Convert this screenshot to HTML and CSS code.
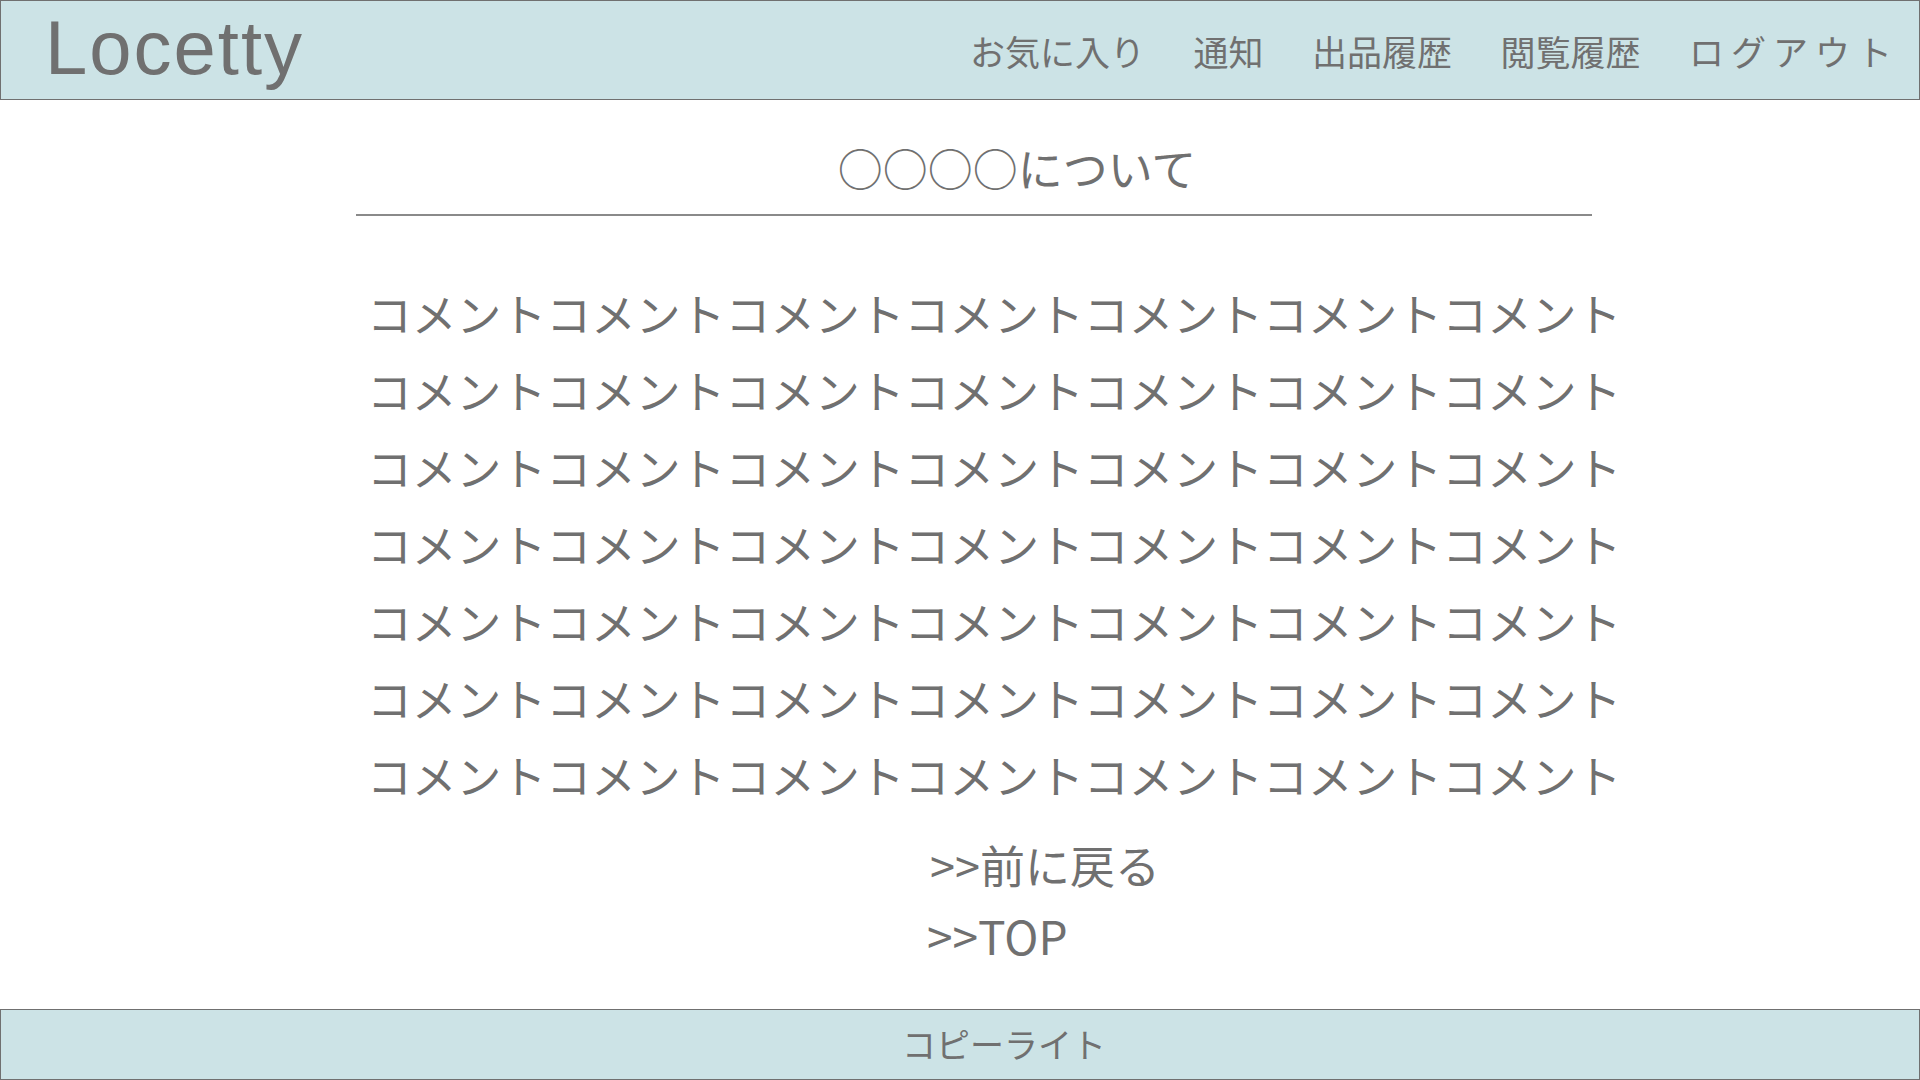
FILE: index.html
```html
<!DOCTYPE html>
<html lang="ja">
<head>
<meta charset="utf-8">
<title>Locetty</title>
<link rel="stylesheet" href="styles.css">
</head>
<body>
<header class="site-header">
  <div class="logo">Locetty</div>
  <nav class="nav">
    <a class="nav-item" href="#">お気に入り</a>
    <a class="nav-item" href="#">通知</a>
    <a class="nav-item" href="#">出品履歴</a>
    <a class="nav-item" href="#">閲覧履歴</a>
    <a class="nav-item nav-logout" href="#">ログアウト</a>
  </nav>
</header>
<main class="main">
  <div class="title-wrap">
    <h1 class="title">○○○○について</h1>
  </div>
  <div class="comments">
    <p class="comment-line">コメントコメントコメントコメントコメントコメントコメント</p>
    <p class="comment-line">コメントコメントコメントコメントコメントコメントコメント</p>
    <p class="comment-line">コメントコメントコメントコメントコメントコメントコメント</p>
    <p class="comment-line">コメントコメントコメントコメントコメントコメントコメント</p>
    <p class="comment-line">コメントコメントコメントコメントコメントコメントコメント</p>
    <p class="comment-line">コメントコメントコメントコメントコメントコメントコメント</p>
    <p class="comment-line">コメントコメントコメントコメントコメントコメントコメント</p>
  </div>
  <div class="links">
    <a class="link link-back" href="#">&gt;&gt;前に戻る</a>
    <a class="link link-top" href="#">&gt;&gt;TOP</a>
  </div>
</main>
<footer class="site-footer">
  <span class="copy">コピーライト</span>
</footer>
</body>
</html>
```
FILE: styles.css
```css
* { box-sizing: border-box; }
html, body { margin: 0; padding: 0; }
body {
  width: 1920px;
  min-height: 1080px;
  display: flex;
  flex-direction: column;
  background: #ffffff;
  color: #707070;
  font-family: "Noto Sans CJK JP", "Noto Sans", sans-serif;
}
a { color: inherit; text-decoration: none; }

.site-header {
  height: 100px;
  background: #cce3e6;
  border: 1px solid #707070;
  display: flex;
  align-items: center;
  justify-content: space-between;
  padding: 0 27px 0 44px;
}
.logo {
  font-family: "Liberation Sans", Arial, sans-serif;
  font-size: 76px;
  line-height: 76px;
  letter-spacing: 2px;
  align-self: flex-start;
  margin-top: 9px;
  padding-bottom: 12px;
  color: #707070;
}
.nav {
  display: flex;
  gap: 48.5px;
  align-items: center;
  margin-top: 2px;
}
.nav-item {
  font-size: 35px;
  line-height: 1.2;
}
.nav-logout { letter-spacing: 7px; margin-right: -7px; }

.main {
  display: flex;
  flex-direction: column;
  padding-left: 356px;
}
.title-wrap {
  width: 1236px;
  margin-top: 38px;
  border-bottom: 2px solid #8a8a8a;
  padding-bottom: 16px;
  padding-left: 86px;
  display: flex;
  justify-content: center;
}
.title {
  margin: 0;
  font-size: 45px;
  font-weight: 400;
  line-height: 60px;
}
.comments {
  margin-top: 58px;
  padding-left: 11px;
  white-space: nowrap;
}
.comment-line {
  margin: 0;
  font-size: 44.8px;
  line-height: 77px;
}
.links {
  margin-top: 17px;
  padding-left: 574px;
  display: flex;
  flex-direction: column;
  align-items: flex-start;
}
.link {
  font-size: 45px;
  line-height: 70px;
}
.link-top { margin-left: -3px; font-size: 46px; }

.site-footer {
  margin-top: auto;
  height: 71px;
  background: #cce3e6;
  border: 1px solid #707070;
  display: flex;
  align-items: center;
  justify-content: center;
  padding-left: 88px;
}
.copy {
  font-size: 34px;
  line-height: 1.2;
}
```
